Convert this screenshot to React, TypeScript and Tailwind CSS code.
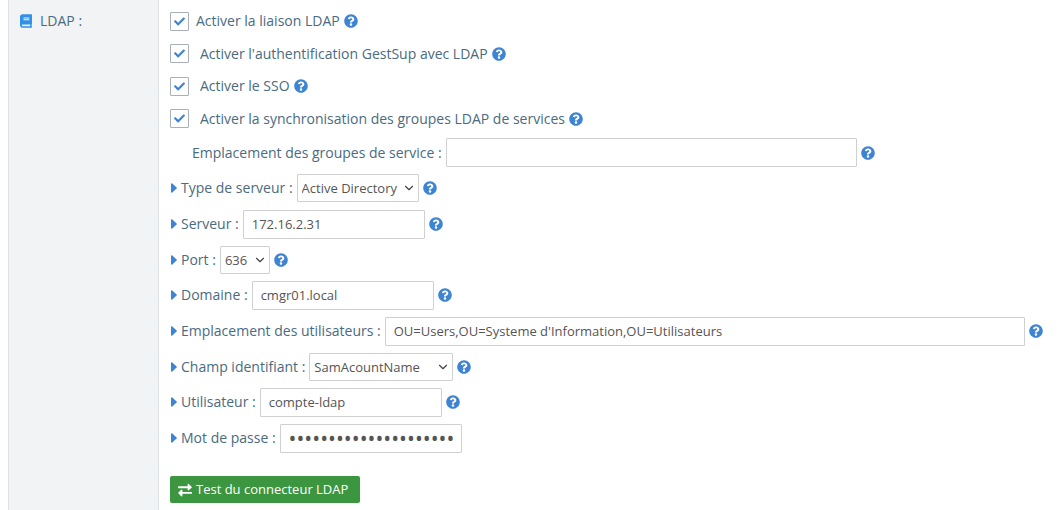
import React, { useState } from "react";
import { FaBook, FaCheck, FaQuestionCircle } from "react-icons/fa";
import { ChevronDown } from "lucide-react";
import clsx from "clsx";

const options = [
  { name: "ldap", label: "Activer la liaison LDAP", gap: "gap-[7px]" },
  {
    name: "ldap_auth",
    label: "Activer l'authentification GestSup avec LDAP",
    gap: "gap-[11px]",
  },
  { name: "ldap_sso", label: "Activer le SSO", gap: "gap-[11px]" },
  {
    name: "ldap_service",
    label: "Activer la synchronisation des groupes LDAP de services",
    gap: "gap-[11px]",
  },
];

const fields = [
  {
    name: "ldap_service_url",
    label: "Emplacement des groupes de service :",
    width: "w-[411px]",
    indent: true,
    help: true,
  },
  {
    name: "ldap_type",
    label: "Type de serveur :",
    width: "w-[122px]",
    choices: ["Active Directory", "OpenLDAP"],
    help: true,
  },
  { name: "ldap_server", label: "Serveur :", width: "w-[182px]", help: true },
  {
    name: "ldap_port",
    label: "Port :",
    width: "w-[50px]",
    choices: ["636", "389"],
    help: true,
  },
  { name: "ldap_domain", label: "Domaine :", width: "w-[182px]", help: true },
  {
    name: "ldap_url",
    label: "Emplacement des utilisateurs :",
    width: "w-[640px]",
    help: true,
  },
  {
    name: "ldap_login_field",
    label: "Champ identifiant :",
    width: "w-[144px]",
    choices: ["SamAcountName", "UserPrincipalName"],
    help: true,
  },
  { name: "ldap_user", label: "Utilisateur :", width: "w-[182px]", help: true },
  {
    name: "ldap_password",
    label: "Mot de passe :",
    width: "w-[182px]",
    type: "password",
  },
];

const Help = () => (
  <FaQuestionCircle size={14} className="shrink-0 text-[#3d84d3]" />
);

const Caret = () => (
  <svg
    viewBox="0 0 6 10"
    className="mr-1 ml-px h-[10px] w-[6px] shrink-0 fill-[#3d84d3]"
  >
    <path d="M0 .9C0 .2.8-.1 1.3.4L5.6 4.4c.4.3.4.9 0 1.2L1.3 9.6C.8 10.1 0 9.8 0 9.1z" />
  </svg>
);

const Exchange = () => (
  <svg viewBox="0 0 14 14" className="size-[14px] shrink-0 fill-current">
    <path d="M.6 3.3H9.6V1.4c0-.6.7-.9 1.1-.5l2.9 2.8c.3.3.3.7 0 1L10.700 7.300c-.4.4-1.100.1-1.100-.5V5.200H.600A.6.6 0 0 1 0 4.600V3.900A.6.6 0 0 1 .6 3.300z" />
    <path d="M13.400 8.900H4.400V7.200c0-.6-.7-.9-1.100-.5L.4 9.500c-.3.3-.3.700 0 1l2.900 2.700c.4.4 1.100.1 1.100-.5V10.800h9a.6.6 0 0 0 .6-.6V9.500a.6.6 0 0 0-.6-.6z" />
  </svg>
);

const App = () => {
  const [checked, setChecked] = useState<Record<string, boolean>>({
    ldap: true,
    ldap_auth: true,
    ldap_sso: true,
    ldap_service: true,
  });

  const [form, setForm] = useState<Record<string, string>>({
    ldap_service_url: "",
    ldap_type: "Active Directory",
    ldap_server: "172.16.2.31",
    ldap_port: "636",
    ldap_domain: "cmgr01.local",
    ldap_url: "OU=Users,OU=Systeme d'Information,OU=Utilisateurs",
    ldap_login_field: "SamAcountName",
    ldap_user: "compte-ldap",
    ldap_password: "motdepasse-ldap-compte-01",
  });

  const handleChange = (
    e: React.ChangeEvent<HTMLInputElement | HTMLSelectElement>,
  ) => {
    const { name, value } = e.target;
    setForm({ ...form, [name]: value });
  };

  return (
    <div className="flex min-h-screen bg-white pl-2 font-['Open_Sans',sans-serif] text-sm text-[#4a6b80]">
      {/* SECTION NAME */}
      <div className="w-[151px] shrink-0 border-x border-[#dfe3e6] bg-[#f1f3f5] pt-[11px] pl-[11px]">
        <div className="flex items-center gap-2">
          <FaBook size={14} className="w-3 text-[#2f91e8]" />
          LDAP :
        </div>
      </div>

      <form
        onSubmit={(e) => e.preventDefault()}
        className="min-w-0 flex-1 pt-[5px] pb-[7px] pl-[11px]"
      >
        {/* OPTIONS */}
        <div className="grid min-h-[130px] auto-rows-fr">
          {options.map((option) => (
            <div key={option.name} className="flex items-center gap-1">
              <label className={clsx("flex items-center", option.gap)}>
                <span className="grid">
                  <input
                    type="checkbox"
                    name={option.name}
                    checked={checked[option.name]}
                    onChange={(e) =>
                      setChecked({
                        ...checked,
                        [option.name]: e.target.checked,
                      })
                    }
                    className="peer col-start-1 row-start-1 size-[19px] appearance-none rounded-[1px] border border-[#a9b0b8] bg-white"
                  />
                  <FaCheck
                    size={11}
                    className="pointer-events-none invisible col-start-1 row-start-1 place-self-center text-[#3d84d3] peer-checked:visible"
                  />
                </span>
                {option.label}
              </label>
              <Help />
            </div>
          ))}
        </div>

        {/* FIELDS */}
        <div className="grid min-h-[321px] auto-rows-fr">
          {fields.map((field) => (
            <div
              key={field.name}
              className={clsx("flex items-center", field.indent && "pl-[22px]")}
            >
              {!field.indent && <Caret />}
              <label htmlFor={field.name} className="mr-1 shrink-0">
                {field.label}
              </label>

              {field.choices ? (
                <span className={clsx("grid shrink-0", field.width)}>
                  <select
                    id={field.name}
                    name={field.name}
                    value={form[field.name]}
                    onChange={handleChange}
                    className="col-start-1 row-start-1 h-7 w-full appearance-none rounded-[1px] border border-[#d0d0d0] bg-white pl-1 text-[13px] text-[#555]"
                  >
                    {field.choices.map((choice) => (
                      <option key={choice}>{choice}</option>
                    ))}
                  </select>
                  <ChevronDown
                    size={14}
                    className="pointer-events-none col-start-1 row-start-1 mr-[3px] self-center justify-self-end text-[#444]"
                  />
                </span>
              ) : (
                <input
                  id={field.name}
                  name={field.name}
                  type={field.type || "text"}
                  value={form[field.name]}
                  onChange={handleChange}
                  className={clsx(
                    "h-[29px] rounded-[1px] border border-[#d0d0d0] bg-white px-2 text-[#555] outline-none focus:border-[#3d84d3]",
                    field.type === "password" ? "text-[21px]" : "text-[13px]",
                    field.width,
                  )}
                />
              )}

              {field.help && (
                <span className="ml-1 shrink-0">
                  <Help />
                </span>
              )}
            </div>
          ))}
        </div>

        {/* BUTTON */}
        <button
          type="submit"
          className="mt-5 flex h-[27px] w-[190px] items-center gap-1 rounded-[2px] bg-[#3c953f] px-2 text-[13px] text-white hover:bg-[#34833a]"
        >
          <Exchange />
          Test du connecteur LDAP
        </button>
      </form>
    </div>
  );
};

export default App;
